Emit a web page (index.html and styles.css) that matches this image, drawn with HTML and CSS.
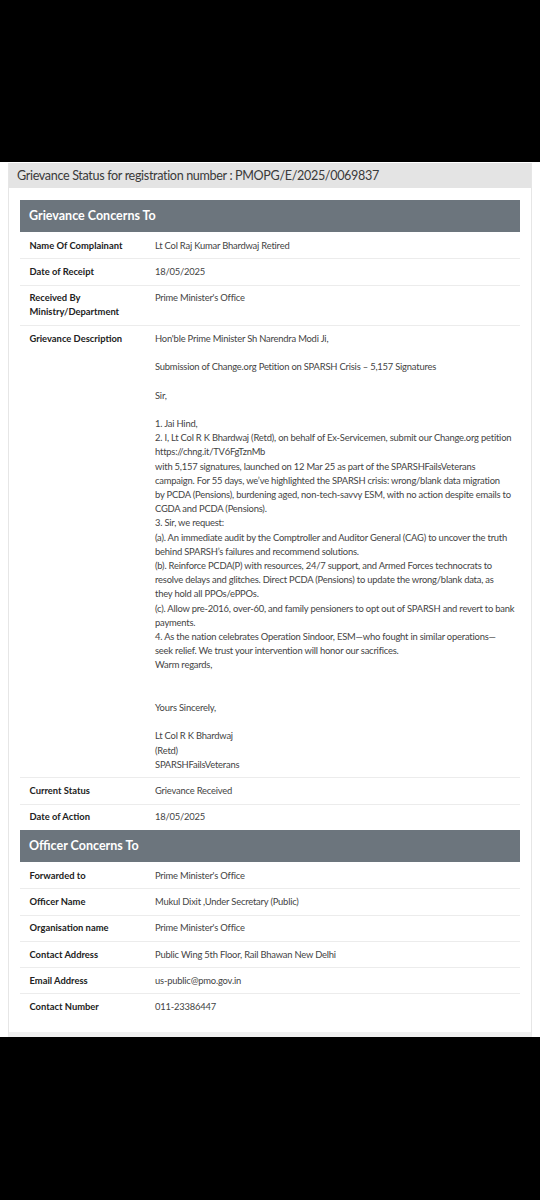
FILE: index.html
```html
<!DOCTYPE html>
<html>
<head>
<meta charset="utf-8">
<link rel="stylesheet" href="styles.css">
</head>
<body>
<div class="screen">
  <div class="page">
    <div class="panel">
      <div class="panel-title">Grievance Status for registration number : PMOPG/E/2025/0069837</div>
      <div class="panel-body">
        <div class="section-head">Grievance Concerns To</div>
        <div class="rows">
          <div class="row"><div class="label">Name Of Complainant</div><div class="value">Lt Col Raj Kumar Bhardwaj Retired</div></div>
          <div class="row"><div class="label">Date of Receipt</div><div class="value">18/05/2025</div></div>
          <div class="row"><div class="label">Received By Ministry/Department</div><div class="value">Prime Minister's Office</div></div>
          <div class="row"><div class="label">Grievance Description</div><div class="value desc">Hon'ble Prime Minister Sh Narendra Modi Ji,

Submission of Change.org Petition on SPARSH Crisis – 5,157 Signatures

Sir,

1. Jai Hind,
2. I, Lt Col R K Bhardwaj (Retd), on behalf of Ex-Servicemen, submit our Change.org petition
https://chng.it/TV6FgTznMb
with 5,157 signatures, launched on 12 Mar 25 as part of the SPARSHFailsVeterans
campaign. For 55 days, we’ve highlighted the SPARSH crisis: wrong/blank data migration
by PCDA (Pensions), burdening aged, non-tech-savvy ESM, with no action despite emails to
CGDA and PCDA (Pensions).
3. Sir, we request:
(a). An immediate audit by the Comptroller and Auditor General (CAG) to uncover the truth
behind SPARSH’s failures and recommend solutions.
(b). Reinforce PCDA(P) with resources, 24/7 support, and Armed Forces technocrats to
resolve delays and glitches. Direct PCDA (Pensions) to update the wrong/blank data, as
they hold all PPOs/ePPOs.
(c). Allow pre-2016, over-60, and family pensioners to opt out of SPARSH and revert to bank
payments.
4. As the nation celebrates Operation Sindoor, ESM—who fought in similar operations—
seek relief. We trust your intervention will honor our sacrifices.
Warm regards,


Yours Sincerely,

Lt Col R K Bhardwaj
(Retd)
SPARSHFailsVeterans</div></div>
          <div class="row"><div class="label">Current Status</div><div class="value">Grievance Received</div></div>
          <div class="row"><div class="label">Date of Action</div><div class="value">18/05/2025</div></div>
        </div>
        <div class="section-head">Officer Concerns To</div>
        <div class="rows">
          <div class="row"><div class="label">Forwarded to</div><div class="value">Prime Minister's Office</div></div>
          <div class="row"><div class="label">Officer Name</div><div class="value">Mukul Dixit ,Under Secretary (Public)</div></div>
          <div class="row"><div class="label">Organisation name</div><div class="value">Prime Minister's Office</div></div>
          <div class="row"><div class="label">Contact Address</div><div class="value">Public Wing 5th Floor, Rail Bhawan New Delhi</div></div>
          <div class="row"><div class="label">Email Address</div><div class="value">us-public@pmo.gov.in</div></div>
          <div class="row"><div class="label">Contact Number</div><div class="value">011-23386447</div></div>
        </div>
      </div>
    </div>
  </div>
</div>
</body>
</html>
```
FILE: styles.css
```css
html, body {
  margin: 0;
  padding: 0;
  background: #000;
}
.screen {
  width: 540px;
  height: 1200px;
  padding-top: 162px;
  box-sizing: border-box;
  background: #000;
  font-family: Lato, "Liberation Sans", sans-serif;
}
.page {
  background: #fff;
  padding: 1px 8px 0 8px;
}
.panel {
  border-left: 1px solid #e6e6e6;
  border-right: 1px solid #e6e6e6;
  border-bottom: 5px solid #f0f0f0;
}
.panel-title {
  background: #e4e4e4;
  color: #3a3a3a;
  font-size: 12.6px;
  letter-spacing: -0.35px;
  height: 25px;
  line-height: 25px;
  padding-left: 8px;
  white-space: nowrap;
}
.panel-body {
  padding: 12px 11px 12px 11px;
}
.section-head {
  background: #6c757d;
  color: #fff;
  font-weight: bold;
  font-size: 12.5px;
  height: 32px;
  line-height: 32px;
  padding-left: 9px;
}
.row {
  display: grid;
  grid-template-columns: 135px 1fr;
  border-top: 1px solid #ececec;
  padding: 5.7px 0 5.4px;
  line-height: 14.2px;
  font-size: 9.4px;
}
.row:first-child {
  border-top-color: transparent;
}
.label {
  padding-left: 9.5px;
  padding-right: 10px;
  font-weight: bold;
  color: #222;
}
.value {
  color: #444;
  letter-spacing: -0.2px;
}
.desc {
  white-space: pre;
}
```
